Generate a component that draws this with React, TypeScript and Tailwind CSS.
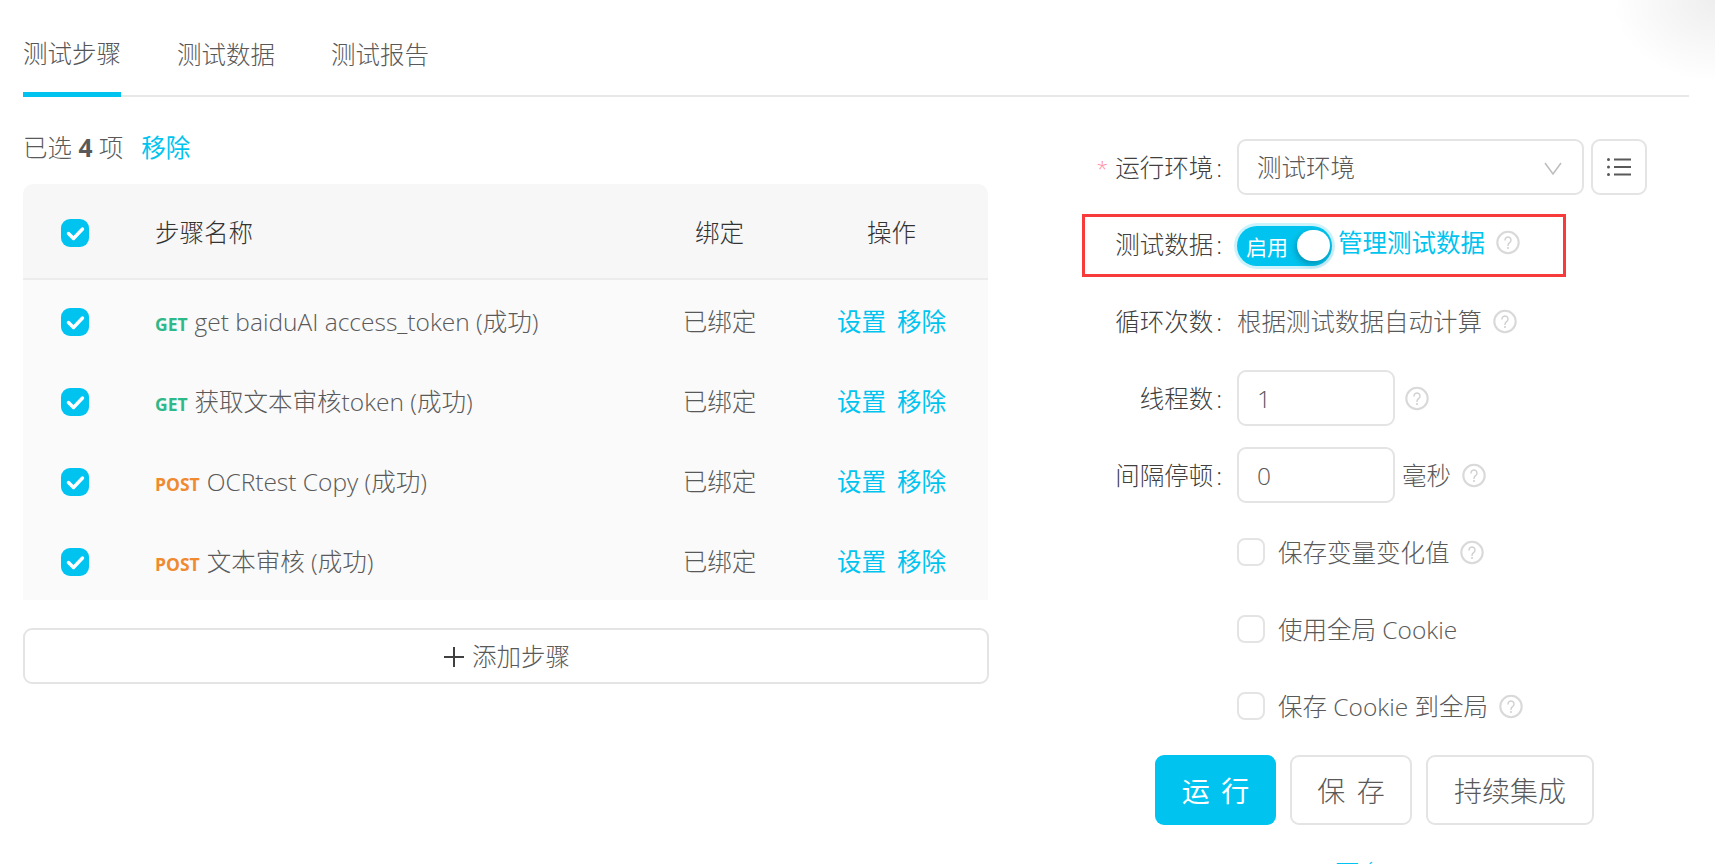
import React from "react";

const Help = () => (
  <svg width="24" height="25" viewBox="0 0 24 25" fill="none" className="shrink-0">
    <circle cx="12" cy="12.5" r="10.7" stroke="#d9d9d9" strokeWidth="2.1" />
    <path d="M9 10a3 3 0 1 1 4.6 2.6c-1 .7-1.6 1.3-1.6 2.8" stroke="#cfcfcf" strokeWidth="1.4" strokeLinecap="round" />
    <circle cx="12" cy="18" r="1" fill="#cfcfcf" />
  </svg>
);

const Check = () => (
  <span className="flex h-[28px] w-[28px] shrink-0 items-center justify-center rounded-[9px] bg-[#00c4ef]">
    <svg width="28" height="28" viewBox="0 0 28 28" fill="none">
      <path d="M7.5 14.5l5 5 9-9.5" stroke="#fff" strokeWidth="3.4" strokeLinecap="round" strokeLinejoin="round" />
    </svg>
  </span>
);

const Label = ({ text, star }: { text?: string; star?: boolean }) => (
  <div className="flex w-[248px] shrink-0 items-center justify-end pr-[14px] pt-[2px] text-[#404040]">
    {star && <span className="mr-[7px] text-[21px] text-[#ff8fa3]">*</span>}
    {text && (
      <>
        <span>{text}</span>
        <span className="ml-[3px] mr-[1px]">:</span>
      </>
    )}
  </div>
);

const Row = ({ children, className = "" }: { children: React.ReactNode; className?: string }) => (
  <div className={`flex h-[56px] items-center mb-[21px] ${className}`}>{children}</div>
);

const Input = ({ value }: { value: string }) => (
  <div className="flex h-[56px] w-[158px] shrink-0 items-center rounded-[9px] border-2 border-[#e4e4e4] pl-[18px] pt-[2px] text-[#595959]">
    {value}
  </div>
);

const Box = () => <span className="h-[28px] w-[28px] shrink-0 rounded-[8px] border-2 border-[#e4e4e4]" />;

const steps = [
  { m: "GET", c: "text-[#2fb888]", n: "get baiduAI access_token (成功)" },
  { m: "GET", c: "text-[#2fb888]", n: "获取文本审核token (成功)" },
  { m: "POST", c: "text-[#f08a30]", n: "OCRtest Copy (成功)" },
  { m: "POST", c: "text-[#f08a30]", n: "文本审核 (成功)" },
];

const cols = "grid grid-cols-[132px_479px_171px_173px] items-center";

export default function App() {
  return (
    <div className="relative h-[864px] overflow-hidden bg-white pl-[23px] pr-[26px] font-['Open_Sans','Noto_Sans_CJK_SC',sans-serif] text-[24.5px] font-light leading-[36px] text-[#595959]">
      <div className="absolute right-0 top-0 h-[80px] w-[100px] bg-[radial-gradient(ellipse_at_top_right,#eeeeee,#ffffff_72%)]" />

      <div className="relative flex h-[97px] gap-[56px] border-b-2 border-[#e8e8e8]">
        <div className="mb-[-2px] h-[97px] border-b-[5px] border-[#00c4ef] pt-[36px] text-[#555555]">测试步骤</div>
        <div className="pt-[37px]">测试数据</div>
        <div className="pt-[37px]">测试报告</div>
      </div>

      <div className="flex">
        <div className="w-[966px] shrink-0">
          <div className="mt-[32px] flex h-[36px] items-center pt-[2px]">
            <span>已选 <b className="font-bold">4</b> 项</span>
            <span className="ml-[18px] font-normal text-[#00c4ef]">移除</span>
          </div>
          <div className="mt-[19px] w-[965px] overflow-hidden rounded-t-[10px]">
            <div className={`${cols} h-[96px] border-b-2 border-[#ececec] bg-[#f7f7f7] pt-[3px] text-[#333333]`}>
              <div className="pl-[38px]"><Check /></div>
              <div>步骤名称</div>
              <div className="text-center">绑定</div>
              <div className="text-center">操作</div>
            </div>
            <div className="h-[320px] overflow-hidden bg-[#fafafa] pt-[2px]">
              {steps.map((s, i) => (
                <div key={i} className={`${cols} h-[80px]`}>
                  <div className="pl-[38px]"><Check /></div>
                  <div className="flex items-center">
                    <b className={`mr-[7px] mt-[3px] text-[17.5px] font-bold ${s.c}`}>{s.m}</b>
                    <span>{s.n}</span>
                  </div>
                  <div className="text-center">已绑定</div>
                  <div className="flex justify-center gap-[11px] font-normal text-[#00c4ef]">
                    <span>设置</span>
                    <span>移除</span>
                  </div>
                </div>
              ))}
            </div>
          </div>
          <div className="mt-[28px] flex h-[56px] items-center justify-center rounded-[9px] border-2 border-[#e4e4e4] pl-[2px] pt-[2px]">
            <svg width="20" height="20" viewBox="0 0 20 20" className="mr-[8px]" fill="none">
              <path d="M0 10h20M10 0v20" stroke="#404040" strokeWidth="2" />
            </svg>
            添加步骤
          </div>
        </div>

        <div className="mt-[42px] min-w-0 flex-1">
          <Row>
            <Label star text="运行环境" />
            <div className="flex h-[56px] w-[347px] items-center justify-between rounded-[9px] border-2 border-[#e4e4e4] pl-[18px] pr-[20px] pt-[2px]">
              测试环境
              <svg width="18" height="13" viewBox="0 0 18 13" fill="none">
                <path d="M1 1l8 11 8-11" stroke="#bdbdbd" strokeWidth="1.5" />
              </svg>
            </div>
            <div className="ml-[7px] flex h-[56px] w-[56px] items-center justify-center rounded-[9px] border-2 border-[#e4e4e4]">
              <svg width="24" height="18" viewBox="0 0 24 18" fill="none">
                <path d="M7 1.5h17M7 9h17M7 16.5h17" stroke="#595959" strokeWidth="2" />
                <circle cx="1.5" cy="1.5" r="1.5" fill="#595959" />
                <circle cx="1.5" cy="9" r="1.5" fill="#595959" />
                <circle cx="1.5" cy="16.5" r="1.5" fill="#595959" />
              </svg>
            </div>
          </Row>

          <Row className="relative">
            <div className="absolute left-[93px] top-[-2px] h-[63px] w-[484px] border-[3px] border-[#f73a3a]" />
            <Label text="测试数据" />
            <div className="mt-[3px] flex h-[40px] w-[95px] shrink-0 items-center justify-between rounded-full bg-[#00c4ef] pl-[9px] pr-[2px] text-[21px] font-normal text-white shadow-[0_0_0_3px_rgba(0,196,239,0.2)]">
              <span className="mt-[3px]">启用</span>
              <span className="h-[31px] w-[33px] rounded-full bg-white shadow-[-1px_3px_6px_rgba(0,50,70,0.35)]" />
            </div>
            <span className="mb-[2px] ml-[6px] font-normal text-[#00c4ef]">管理测试数据</span>
            <span className="mb-[3px] ml-[11px]"><Help /></span>
          </Row>

          <Row>
            <Label text="循环次数" />
            <span className="pt-[2px]">根据测试数据自动计算</span>
            <span className="ml-[11px]"><Help /></span>
          </Row>

          <Row>
            <Label text="线程数" />
            <Input value="1" />
            <span className="ml-[10px]"><Help /></span>
          </Row>

          <Row>
            <Label text="间隔停顿" />
            <Input value="0" />
            <span className="ml-[7px] pt-[2px]">毫秒</span>
            <span className="ml-[11px]"><Help /></span>
          </Row>

          <Row>
            <Label />
            <Box />
            <span className="ml-[13px] pt-[2px]">保存变量变化值</span>
            <span className="ml-[10px]"><Help /></span>
          </Row>

          <Row>
            <Label />
            <Box />
            <span className="ml-[13px] pt-[2px]">使用全局 Cookie</span>
          </Row>

          <Row>
            <Label />
            <Box />
            <span className="ml-[13px] pt-[2px]">保存 Cookie 到全局</span>
            <span className="ml-[11px]"><Help /></span>
          </Row>

          <div className="ml-[166px] flex gap-[14px] text-[28px] [word-spacing:4px]">
            <div className="flex h-[70px] w-[121px] items-center justify-center rounded-[9px] bg-[#00c4ef] pt-[2px] font-normal text-white">运 行</div>
            <div className="flex h-[70px] w-[122px] items-center justify-center rounded-[9px] border-2 border-[#e4e4e4] pt-[2px]">保 存</div>
            <div className="flex h-[70px] w-[168px] items-center justify-center rounded-[9px] border-2 border-[#e4e4e4] pt-[2px]">持续集成</div>
          </div>
          <div className="ml-[346px] mt-[31px] text-[#00c4ef]">更多</div>
        </div>
      </div>
    </div>
  );
}
